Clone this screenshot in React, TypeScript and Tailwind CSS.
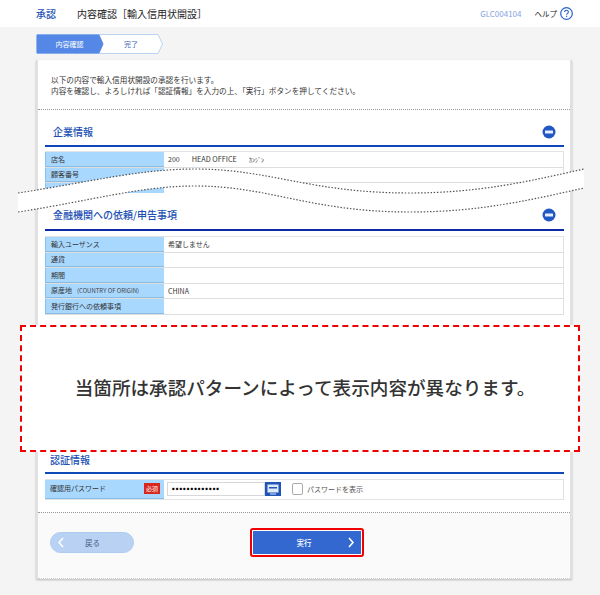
const FONT = "font-['Noto_Sans_CJK_JP','Noto_Sans',sans-serif]";

function MinusIcon() {
    return (
        <svg width="14" height="14" viewBox="0 0 14 14" className="shrink-0">
            <circle cx="7" cy="7" r="6.5" fill="#2158c4" />
            <rect x="3" y="5.5" width="8" height="3" rx="0.5" fill="#e8eefb" />
        </svg>
    );
}

function SectionHead({ title, icon, lineColor, className }: { title: string; icon?: boolean; lineColor: string; className: string }) {
    return (
        <div className={`flex items-center justify-between border-b-2 pr-[8px] ${lineColor} ${className}`}>
            <span className="text-[10px] leading-none font-medium text-[#1d50b4]">{title}</span>
            {icon && <MinusIcon />}
        </div>
    );
}

function Row({ label, sub, value, last }: { label: string; sub?: string; value?: React.ReactNode; last?: boolean }) {
    return (
        <div className={`grid grid-cols-[119px_1fr] h-[15.6px] border-r border-[#e2e2e2] ${last ? '' : 'border-b'} border-b-[#dedede]`}>
            <div className="bg-[#a9d8ff] border-l border-[#8fc0e8] border-b border-b-[#88bce6] pl-[5px] flex items-center text-[7px] text-[#333] whitespace-nowrap">
                {label}
                {sub && <span className="ml-[5px] text-[6px] text-[#444]">{sub}</span>}
            </div>
            <div className="pl-[4px] flex items-center text-[7px] text-[#333] whitespace-pre">{value}</div>
        </div>
    );
}

function Steps() {
    return (
        <div className="relative w-[127px] h-[20px] ml-[36px] mt-[7px]">
            <svg width="127" height="20" viewBox="0 0 127 20" className="absolute inset-0">
                <path d="M1 .5H122L126.5 10L122 19.5H1Z" fill="#fff" stroke="#b9d3f3" />
                <path d="M1 1H63L67 10L63 19H1Z" fill="#5487e6" stroke="#5487e6" />
            </svg>
            <div className="relative flex h-full items-center text-[7px]">
                <span className="w-[67px] text-center text-white">内容確認</span>
                <span className="w-[56px] text-center text-[#3f63b8]">完了</span>
            </div>
        </div>
    );
}

function WaveTear() {
    const top = 'M18 193C90 182 140 169 195 169C270 169 310 193 410 193C480 193 530 181 584 169';
    const bottom = 'M18 212C90 201 140 186 195 186C270 186 310 212 410 212C480 212 530 200 584 188';
    return (
        <svg width="600" height="595" viewBox="0 0 600 595" className="absolute left-0 top-0 pointer-events-none">
            <path d="M18 193C90 182 140 169 195 169C270 169 310 193 410 193C480 193 530 181 584 169V188C530 200 480 212 410 212C310 212 270 186 195 186C140 186 90 201 18 212Z" fill="#fff" />
            <path d={top} fill="none" stroke="#555" strokeWidth="1.2" strokeDasharray="1.5 1.7" />
            <path d={bottom} fill="none" stroke="#555" strokeWidth="1.2" strokeDasharray="1.5 1.7" />
        </svg>
    );
}

export default function App() {
    return (
        <div className={`relative w-[600px] h-[595px] overflow-hidden bg-[#f4f4f4] ${FONT}`}>
            {/* Header */}
            <div className="h-[27px] bg-white flex items-center pl-[36px] pr-[27px]">
                <span className="w-[41px] text-[10px] font-medium text-[#1d50b4]">承認</span>
                <span className="text-[10px] text-[#222] whitespace-nowrap">内容確認［輸入信用状開設］</span>
                <span className="ml-auto text-[8px] text-[#86a3e2]">GLC004104</span>
                <span className="ml-[13px] text-[7.5px] text-[#222]">ヘルプ</span>
                <svg width="13" height="13" viewBox="0 0 13 13" className="ml-[3px]">
                    <circle cx="6.5" cy="6.5" r="5.8" fill="#fff" stroke="#2a62c8" strokeWidth="1.2" />
                    <path d="M4.6 5.1C4.6 3.9 5.5 3.3 6.5 3.3C7.6 3.3 8.4 4 8.4 5C8.4 6.3 6.6 6.4 6.6 7.8" fill="none" stroke="#2a62c8" strokeWidth="1.1" />
                    <rect x="6" y="8.7" width="1.2" height="1.2" fill="#2a62c8" />
                </svg>
            </div>

            <Steps />

            {/* Card */}
            <div className="ml-[36px] mt-[6px] w-[536px] h-[519px] bg-white border-x-2 border-[#e0e0e0] shadow-[0_1px_2px_rgba(0,0,0,0.25)] flex flex-col">
                <div className="h-[50px] border-b border-dotted border-[#999] pl-[13px] pt-[14px] text-[7.65px] leading-[11px] text-[#333]">
                    <p>以下の内容で輸入信用状開設の承認を行います。</p>
                    <p>内容を確認し、よろしければ「認証情報」を入力の上、「実行」ボタンを押してください。</p>
                </div>

                <div className="flex-1 pl-[7px] pr-[6px]">
                    <SectionHead title="企業情報" icon lineColor="border-[#1047b8]" className="h-[37px] pl-[8px] pt-[8px]" />
                    <div className="mt-[4px] h-[42px] overflow-hidden border-t border-[#e2e2e2]">
                        <Row
                            label="店名"
                            value={
                                <>
                                    <span>200</span>
                                    <span className="ml-[12px] text-[7.3px]">HEAD OFFICE</span>
                                    <span className="ml-[12px] text-[6px]">ｶﾝｼﾞﾝ</span>
                                </>
                            }
                        />
                        <Row label="顧客番号" />
                        <Row label="" />
                    </div>

                    <SectionHead title="金融機関への依頼/申告事項" icon lineColor="border-[#0b2aa8]" className="mt-[2px] h-[36px] pl-[8px] pt-[6px]" />
                    <div className="mt-[5px] border-t border-[#e2e2e2]">
                        <Row label="輸入ユーザンス" value="希望しません" />
                        <Row label="通貨" />
                        <Row label="期間" />
                        <Row label="原産地" sub="(COUNTRY OF ORIGIN)" value="CHINA" />
                        <Row label="発行銀行への依頼事項" />
                    </div>

                    <SectionHead title="認証情報" lineColor="border-[#1047b8]" className="mt-[133px] h-[26px] pl-[5px] pt-[1px]" />
                    <div className="mt-[5px] h-[21px] grid grid-cols-[119px_1fr] border-y border-r border-[#e2e2e2]">
                        <div className="bg-[#a9d8ff] border-b border-[#88bce6] pl-[5px] pr-[4px] flex items-center justify-between text-[7px] text-[#333]">
                            <span className="pb-[2px]">確認用パスワード</span>
                            <span className="w-[16px] h-[11px] bg-[#d8261c] text-white text-[6px] leading-[11px] text-center">必須</span>
                        </div>
                        <div className="pl-[3px] flex items-center">
                            <div className="w-[98px] h-[14px] bg-white border border-[#d8d8d8] pl-[4px] flex items-center text-[2.6px] tracking-[1.1px] text-black leading-none">
                                ●●●●●●●●●●●●●
                            </div>
                            <svg width="16" height="14" viewBox="0 0 16 14">
                                <rect width="16" height="14" fill="#1f55b8" />
                                <rect x="2.5" y="2.5" width="11" height="8" fill="#dfe9f8" />
                                <rect x="4" y="5" width="8" height="1.5" fill="#1f55b8" />
                                <rect x="5" y="11.5" width="6" height="1" fill="#dfe9f8" />
                            </svg>
                            <span className="ml-[11px] w-[11px] h-[12px] bg-white border-[1.5px] border-[#aaa] rounded-[2px]" />
                            <span className="ml-[4px] text-[7px] text-[#555] whitespace-nowrap">パスワードを表示</span>
                        </div>
                    </div>
                </div>

                {/* Footer buttons */}
                <div className="h-[67px] bg-[#fafafa] border-t border-dotted border-[#999] border-b border-b-[#d0d0d0] relative flex">
                    <button className="mt-[19px] ml-[12px] w-[84px] h-[21px] rounded-full bg-[#b9d2f4] border border-[#aecbf1] flex items-center text-[7.5px] text-[#4a5f85]">
                        <svg width="8" height="11" viewBox="0 0 8 11" className="ml-[6px]">
                            <path d="M6 1L2 5.5L6 10" fill="none" stroke="#fff" strokeWidth="1.5" />
                        </svg>
                        <span className="ml-[20px]">戻る</span>
                    </button>
                    <button className="mt-[15px] ml-[116px] w-[114px] h-[29px] rounded-[3px] border-2 border-[#f00000] bg-white p-px">
                        <span className="h-full bg-[#3268cf] flex items-center text-[7.5px] text-white font-medium">
                            <span className="flex-1 text-center pl-[8px]">実行</span>
                            <svg width="8" height="11" viewBox="0 0 8 11" className="mr-[6px]">
                                <path d="M2 1L6 5.5L2 10" fill="none" stroke="#fff" strokeWidth="1.6" />
                            </svg>
                        </span>
                    </button>
                </div>
            </div>

            <WaveTear />

            {/* Note overlay */}
            <div className="absolute left-[20px] top-[325px] w-[560px] h-[127px] bg-white border-2 border-dashed border-[#f00000] flex items-center justify-center pl-[10px] pb-[3px]">
                <span className="text-[18.6px] font-medium text-[#333] whitespace-nowrap">当箇所は承認パターンによって表示内容が異なります。</span>
            </div>
        </div>
    );
}
